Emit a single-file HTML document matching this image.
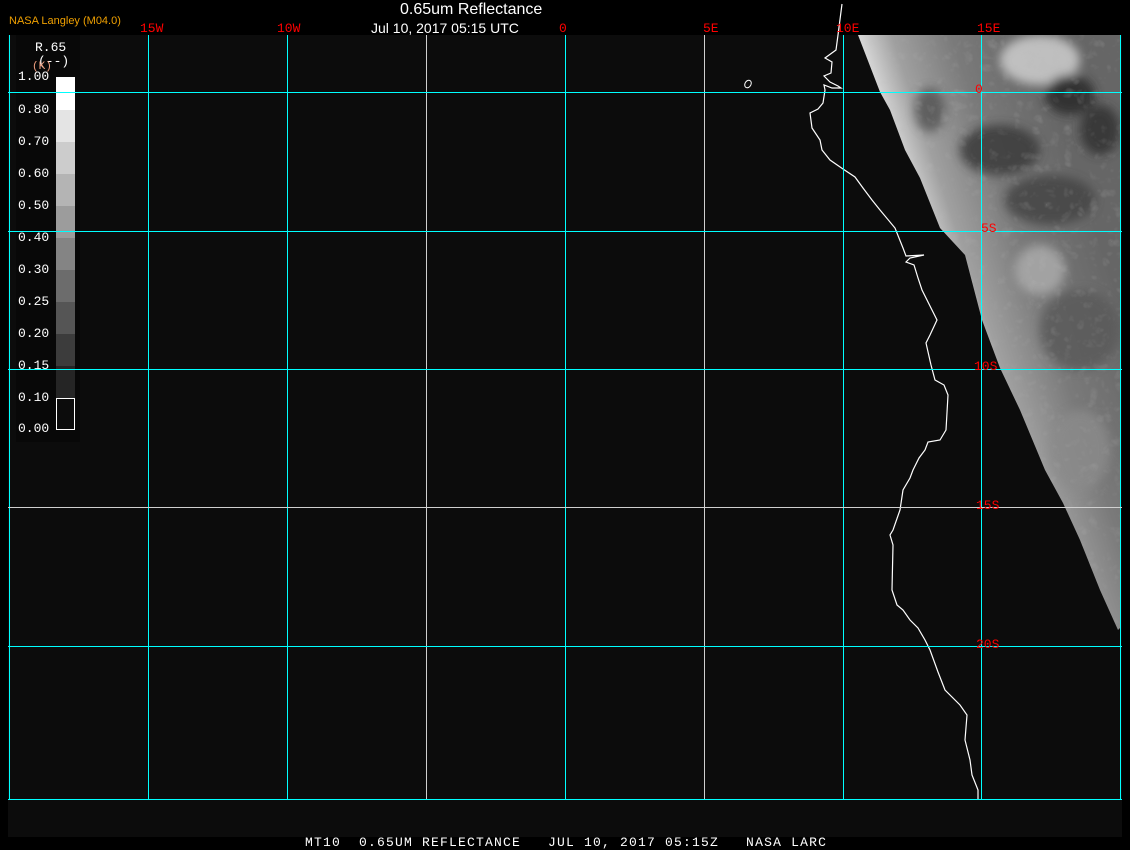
<!DOCTYPE html>
<html><head><meta charset="utf-8"><style>
html,body{margin:0;padding:0;background:#000;width:1130px;height:850px;overflow:hidden;font-family:"Liberation Mono",monospace}
.t{position:absolute;white-space:nowrap}
.v{position:absolute;top:35px;height:765px;width:1px;background:#00ffff}
.h{position:absolute;left:8px;width:1114px;height:1px;background:#00ffff}
</style></head><body>
<svg width="1130" height="850" style="position:absolute;left:0;top:0">
<defs>
<linearGradient id="g" x1="920" y1="300" x2="1100" y2="240" gradientUnits="userSpaceOnUse">
<stop offset="0" stop-color="#f4f4f4"/><stop offset="0.12" stop-color="#dcdcdc"/><stop offset="0.3" stop-color="#a0a0a0"/><stop offset="0.6" stop-color="#7a7a7a"/><stop offset="1" stop-color="#666"/>
</linearGradient>
<filter id="b"><feGaussianBlur stdDeviation="5"/></filter>
<filter id="n"><feTurbulence baseFrequency="0.08" numOctaves="2" seed="3"/><feColorMatrix type="matrix" values="0 0 0 0 0.5 0 0 0 0 0.5 0 0 0 0 0.5 0.6 0.6 0 0 -0.35"/></filter>
<clipPath id="c"><polygon points="858,35 880,92 890,110 905,150 920,178 940,228 965,255 982,320 1000,368 1020,410 1045,470 1063,503 1080,540 1100,590 1118,630 1120,628 1120,35"/></clipPath>
</defs>
<rect x="8" y="35" width="1114" height="802" fill="#0c0c0c"/>
<rect x="16" y="35" width="64" height="407" fill="#080808"/>
<g clip-path="url(#c)">
<rect x="850" y="35" width="280" height="600" fill="url(#g)"/>
<g filter="url(#b)" opacity="0.85">
<ellipse cx="1040" cy="60" rx="40" ry="25" fill="#cfcfcf"/>
<ellipse cx="1070" cy="95" rx="25" ry="20" fill="#2a2a2a"/>
<ellipse cx="1000" cy="150" rx="40" ry="25" fill="#3a3a3a"/>
<ellipse cx="930" cy="110" rx="15" ry="22" fill="#555"/>
<ellipse cx="1040" cy="270" rx="25" ry="25" fill="#aaa"/>
<ellipse cx="1050" cy="200" rx="45" ry="25" fill="#454545"/>
<ellipse cx="1100" cy="130" rx="20" ry="25" fill="#333"/>
<ellipse cx="1080" cy="330" rx="40" ry="40" fill="#5a5a5a"/>
<ellipse cx="1080" cy="450" rx="30" ry="40" fill="#8a8a8a"/>
</g>
<rect x="850" y="35" width="280" height="600" filter="url(#n)" opacity="0.5"/>
</g>
<g>
<rect x="56" y="77" width="19" height="33" fill="#fff"/>
<rect x="56" y="110" width="19" height="32" fill="#e4e4e4"/>
<rect x="56" y="142" width="19" height="32" fill="#cccccc"/>
<rect x="56" y="174" width="19" height="32" fill="#b4b4b4"/>
<rect x="56" y="206" width="19" height="32" fill="#9c9c9c"/>
<rect x="56" y="238" width="19" height="32" fill="#848484"/>
<rect x="56" y="270" width="19" height="32" fill="#6c6c6c"/>
<rect x="56" y="302" width="19" height="32" fill="#555"/>
<rect x="56" y="334" width="19" height="32" fill="#3c3c3c"/>
<rect x="56" y="366" width="19" height="32" fill="#252525"/>
<rect x="56.5" y="398.5" width="18" height="31" fill="#0c0c0c" stroke="#fff"/>
</g>
<polyline fill="none" stroke="#fff" stroke-width="1.2" points="842,4 838,35 836,50 825,58 832,62 831,73 824,76 830,82 838,86 841,88 832,88 824,85 825,90 823,103 818,109 810,113 812,128 820,140 822,150 830,160 843,169 855,177 863,188 872,200 880,210 895,228 903,248 906,256 924,255 910,258 906,262 914,265 918,278 922,290 937,320 930,335 926,343 931,365 935,380 944,385 948,395 946,430 940,440 928,442 925,450 919,458 913,470 910,478 903,490 900,510 893,530 890,535 893,545 892,590 897,605 903,610 910,620 918,628 925,640 930,650 938,672 945,690 960,705 967,715 965,740 970,760 972,775 978,790 978,800"/>
<ellipse cx="748" cy="84" rx="3" ry="4" transform="rotate(30 748 84)" fill="none" stroke="#fff"/>
</svg>
<div class="v" style="left:9px"></div>
<div class="v" style="left:148px"></div>
<div class="v" style="left:287px"></div>
<div class="v" style="left:426px;background:#d0d0d0"></div>
<div class="v" style="left:565px"></div>
<div class="v" style="left:704px;background:#d0d0d0"></div>
<div class="v" style="left:843px"></div>
<div class="v" style="left:981px"></div>
<div class="v" style="left:1120px"></div>
<div class="h" style="top:92px"></div>
<div class="h" style="top:231px"></div>
<div class="h" style="top:369px"></div>
<div class="h" style="top:507px;background:#d0d0d0"></div>
<div class="h" style="top:646px"></div>
<div class="h" style="top:799px"></div>
<div class="t" style="left:400px;top:1px;font:16px 'Liberation Sans',sans-serif;color:#fff">0.65um Reflectance</div>
<div class="t" style="left:371px;top:20px;font:14px 'Liberation Sans',sans-serif;color:#fff">Jul 10, 2017 05:15 UTC</div>
<div class="t" style="left:9px;top:15px;font:11px 'Liberation Sans',sans-serif;color:#f0a000">NASA Langley (M04.0)</div>
<div style="color:#f00;font-size:13px">
<div class="t" style="left:140px;top:21px">15W</div>
<div class="t" style="left:277px;top:21px">10W</div>
<div class="t" style="left:559px;top:21px">0</div>
<div class="t" style="left:703px;top:21px">5E</div>
<div class="t" style="left:836px;top:21px">10E</div>
<div class="t" style="left:977px;top:21px">15E</div>
<div class="t" style="left:975px;top:82px">0</div>
<div class="t" style="left:981px;top:221px">5S</div>
<div class="t" style="left:974px;top:359px">10S</div>
<div class="t" style="left:976px;top:498px">15S</div>
<div class="t" style="left:976px;top:637px">20S</div>
</div>
<div style="color:#fff;font-size:13px">
<div class="t" style="left:35px;top:40px">R.65</div>
<div class="t" style="left:38px;top:54px">(--)</div>
<div class="t" style="left:32px;top:61px;color:#f0a080;font-size:11px">(K)</div>
<div class="t" style="left:18px;top:69px">1.00</div>
<div class="t" style="left:18px;top:102px">0.80</div>
<div class="t" style="left:18px;top:134px">0.70</div>
<div class="t" style="left:18px;top:166px">0.60</div>
<div class="t" style="left:18px;top:198px">0.50</div>
<div class="t" style="left:18px;top:230px">0.40</div>
<div class="t" style="left:18px;top:262px">0.30</div>
<div class="t" style="left:18px;top:294px">0.25</div>
<div class="t" style="left:18px;top:326px">0.20</div>
<div class="t" style="left:18px;top:358px">0.15</div>
<div class="t" style="left:18px;top:390px">0.10</div>
<div class="t" style="left:18px;top:421px">0.00</div>
</div>
<div class="t" style="left:305px;top:835px;color:#fff;font-size:13px;letter-spacing:1.2px">MT10&nbsp; 0.65UM REFLECTANCE&nbsp;&nbsp; JUL 10, 2017 05:15Z&nbsp;&nbsp; NASA LARC</div>
</body></html>
